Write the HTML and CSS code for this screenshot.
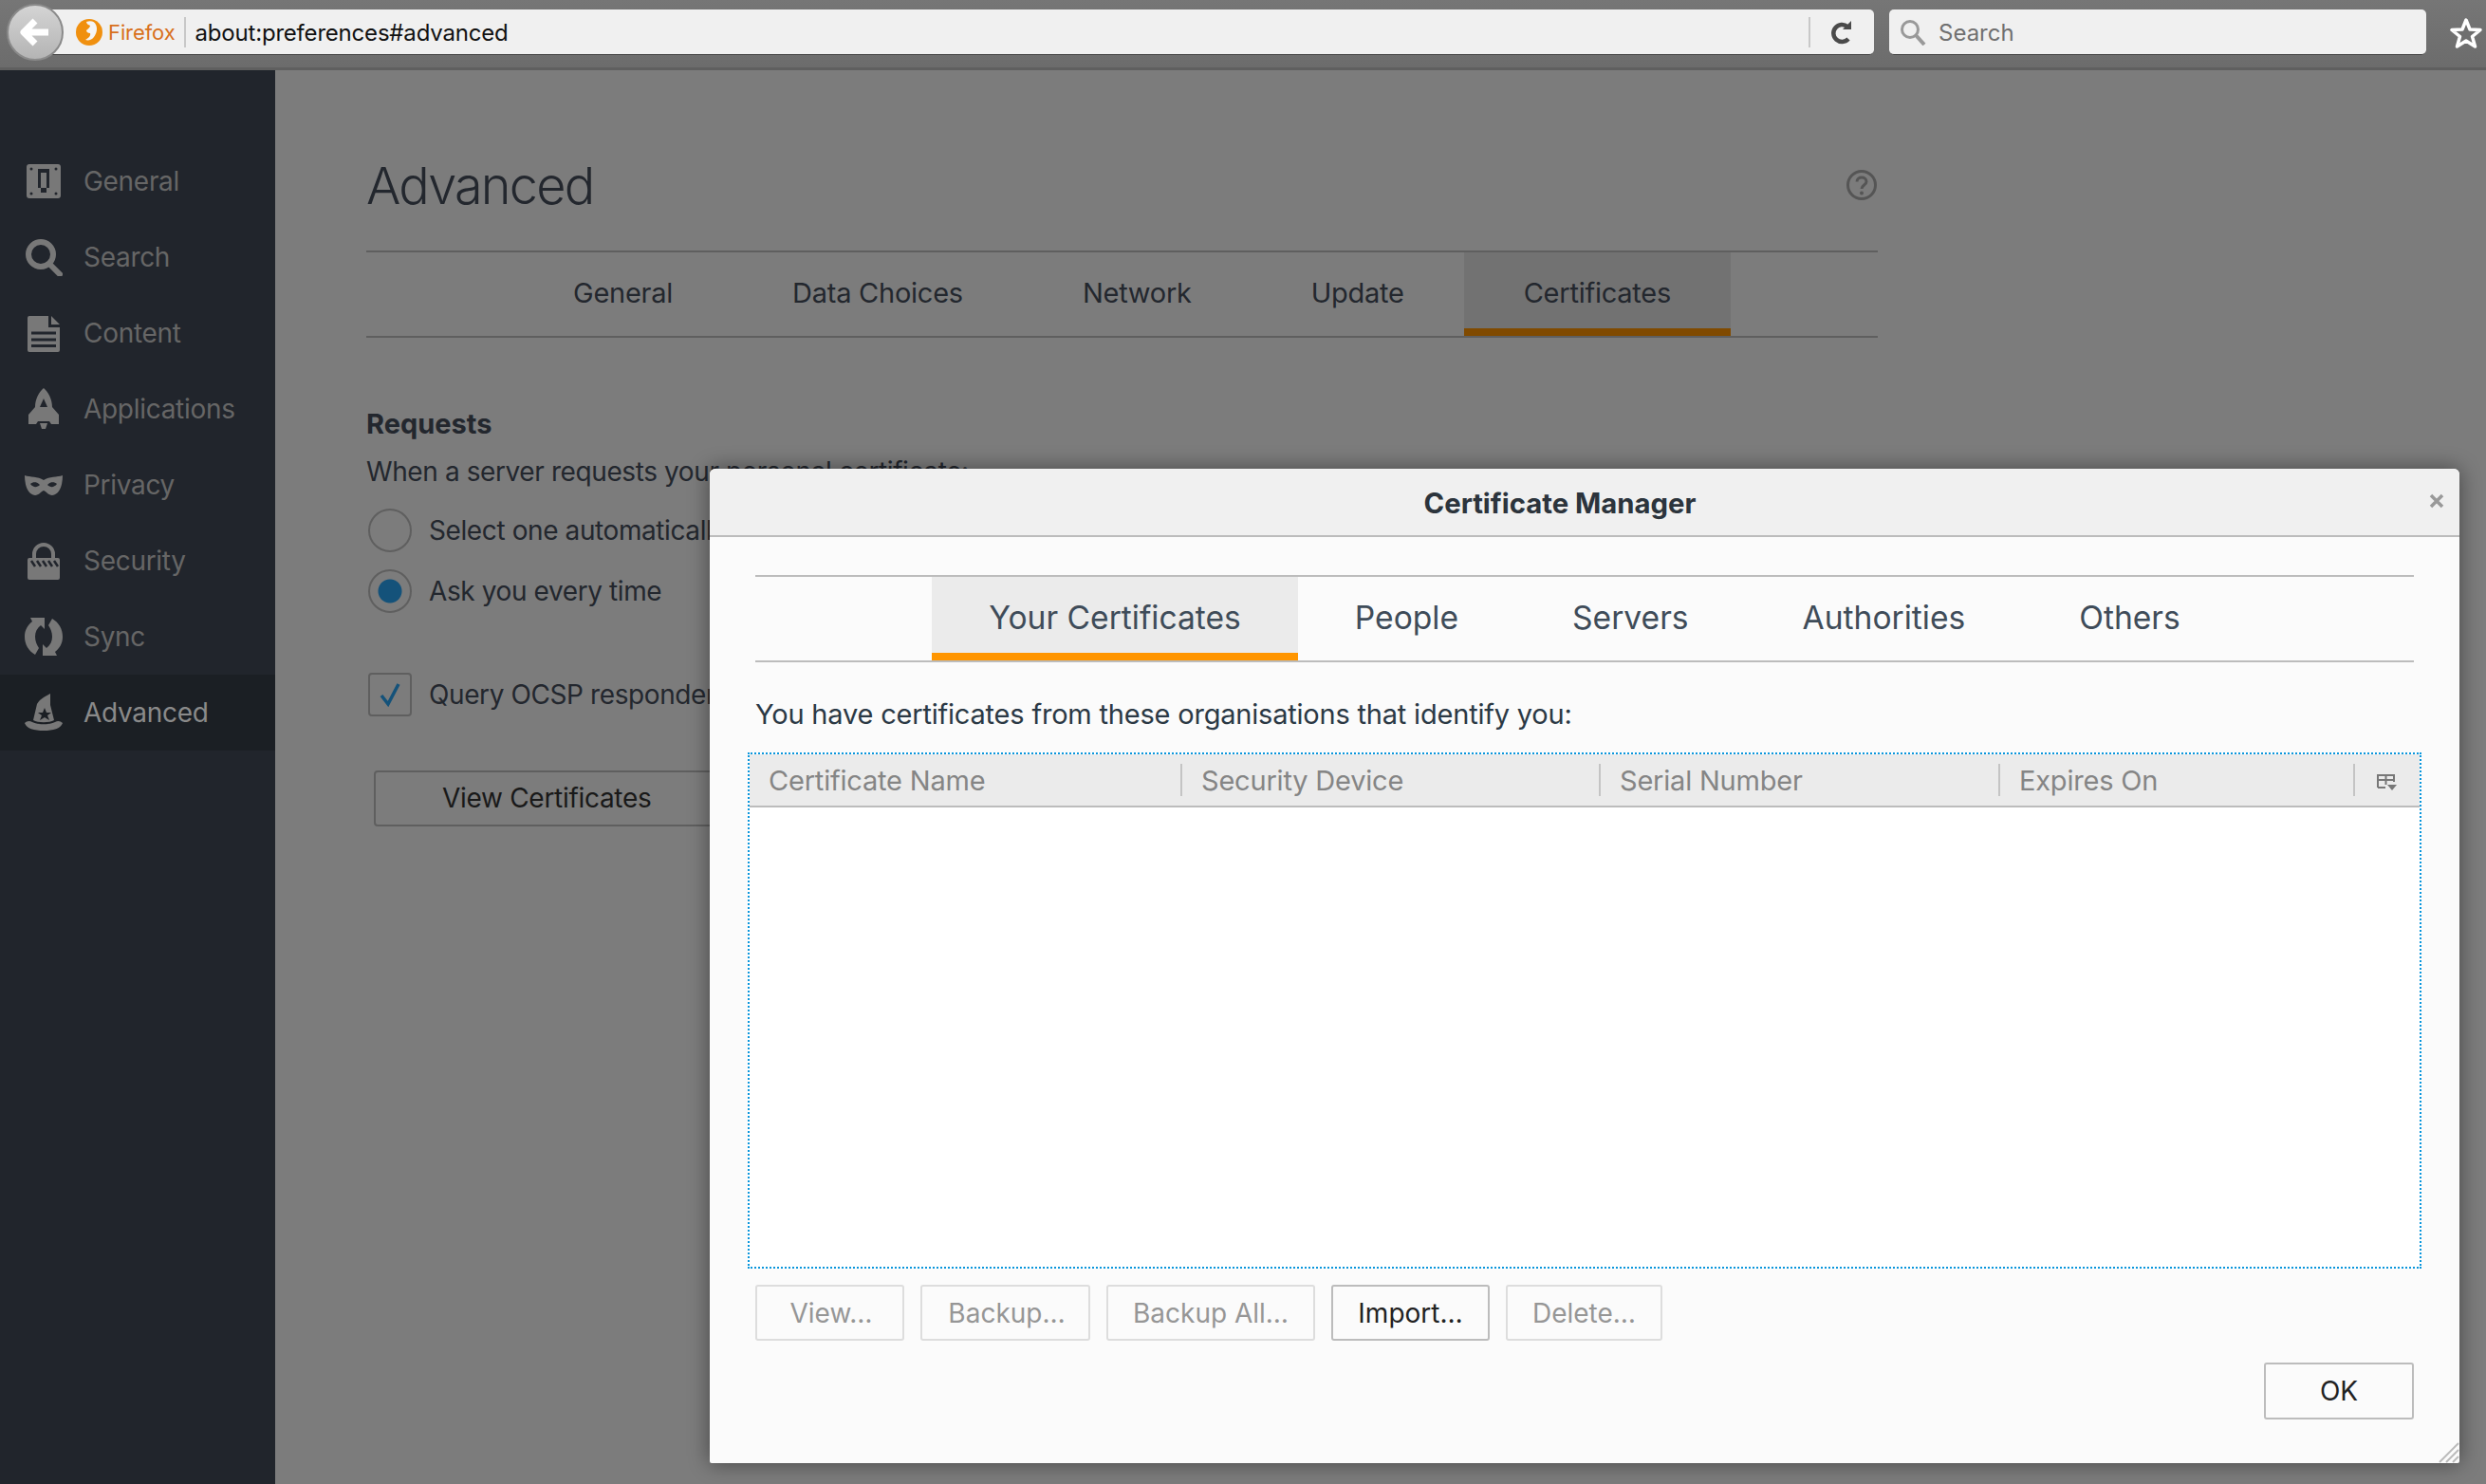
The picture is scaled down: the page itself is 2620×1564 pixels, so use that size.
FILE: index.html
```html
<!DOCTYPE html>
<html lang="en">
  <head>
    <meta charset="UTF-8" />
    <title>about:preferences#advanced</title>
    <link rel="stylesheet" href="styles.css">
  </head>
  <body>
    <!-- browser toolbar -->
    <div class="toolbar">
      <div class="back-button">
        <svg width="34" height="34" viewBox="0 0 34 34">
          <path d="M17 5 L5 17 L17 29 M6 17 H31" fill="none" stroke="#fff" stroke-width="7" stroke-linejoin="round" />
        </svg>
      </div>
      <div class="urlbar">
        <svg class="fx-logo" width="28" height="28" viewBox="0 0 28 28">
          <circle cx="14" cy="14" r="14" fill="#f0900f" />
          <path d="M11 3 C16 1 20 3 21 6 C23 10 22 15 19 19 C17 22 13 23 10 22 C13 20 16 18 15 15 C13 15 11 14 11 12 C13 10 15 9 15 7 C13 6 11 5 11 3 Z" fill="#f5f5f5" />
        </svg>
        <span class="identity">Firefox</span>
        <span class="url-text">about:preferences#advanced</span>
        <span class="reload">
          <svg width="26" height="26" viewBox="0 0 26 26">
            <path d="M19 7 A9 9 0 1 0 20 20" fill="none" stroke="#4a4a4a" stroke-width="4.5" />
            <path d="M14 10 L23 10 L23 1 Z" fill="#4a4a4a" />
          </svg>
        </span>
      </div>
      <div class="searchbar">
        <svg width="28" height="28" viewBox="0 0 28 28">
          <circle cx="11" cy="11" r="8.5" fill="none" stroke="#999" stroke-width="3" />
          <path d="M17 17 L26 27" stroke="#999" stroke-width="4" />
        </svg>
        <span>Search</span>
      </div>
      <svg class="star" width="34" height="34" viewBox="0 0 34 34">
        <path d="M17 3 L21 13 L32 13.5 L23.5 20.5 L26.5 31 L17 25 L7.500 31 L10.500 20.500 L2 13.500 L13 13 Z" fill="#6f6f6f" stroke="#fff" stroke-width="3.5" stroke-linejoin="round" />
      </svg>
    </div>

    <div class="main">
      <!-- left categories -->
      <div class="sidebar">
        <div class="cat">
          <svg width="40" height="40" viewBox="0 0 40 40">
            <rect x="2" y="2" width="36" height="36" rx="3" fill="#787878" />
            <circle cx="7" cy="7" r="1.500" fill="#21252c" /><circle cx="33" cy="7" r="1.500" fill="#21252c" />
            <circle cx="7" cy="33" r="1.500" fill="#21252c" /><circle cx="33" cy="33" r="1.500" fill="#21252c" />
            <path d="M14 7 H26 V27 H23 V32 H17 V27 H14 Z" fill="#21252c" />
            <rect x="17" y="11" width="6" height="16" fill="#787878" />
          </svg>
          <span>General</span>
        </div>
        <div class="cat">
          <svg width="40" height="40" viewBox="0 0 40 40">
            <circle cx="17" cy="17" r="13" fill="none" stroke="#787878" stroke-width="6" />
            <path d="M26 27 L37 38" stroke="#787878" stroke-width="6" stroke-linecap="round" />
          </svg>
          <span>Search</span>
        </div>
        <div class="cat">
          <svg width="40" height="40" viewBox="0 0 40 40">
            <path d="M5 2 Q3 2 3 4 V38 Q3 40 5 40 H35 Q37 40 37 38 V14 H25 V2 Z M28 2 L37 11 H28 Z" fill="#787878" />
            <path d="M7 20 H33 M7 27 H33 M7 33.500 H33" stroke="#21252c" stroke-width="3" />
          </svg>
          <span>Content</span>
        </div>
        <div class="cat">
          <svg width="40" height="44" viewBox="0 0 40 44">
            <path d="M20 0 C25 4 29 12 29 20 L36 28 V38 H28 L26 35 H14 L12 38 H4 V28 L11 20 C11 12 15 4 20 0 Z" fill="#787878" />
            <path d="M20 11 L24 20 H16 Z" fill="#21252c" />
            <path d="M16 37 H24 L22 43 H18 Z" fill="#787878" />
          </svg>
          <span>Applications</span>
        </div>
        <div class="cat">
          <svg width="40" height="24" viewBox="0 0 40 24">
            <path d="M0 2 C6 4 14 3 20 7 C26 3 34 4 40 2 C40 12 37 22 29 23 C25 23 23 19 20 18 C17 19 15 23 11 23 C3 22 0 12 0 2 Z" fill="#787878" />
            <path d="M6 11 C9 8 14 9 16 12 C13 15 9 15 6 11 Z M34 11 C31 8 26 9 24 12 C27 15 31 15 34 11 Z" fill="#21252c" />
          </svg>
          <span>Privacy</span>
        </div>
        <div class="cat">
          <svg width="40" height="40" viewBox="0 0 40 40">
            <path d="M10 18 V13 A10 10 0 0 1 30 13 V18" fill="none" stroke="#787878" stroke-width="4" />
            <rect x="3" y="17" width="34" height="23" rx="2" fill="#787878" />
            <path d="M7 20 L11 26 M13 20 L17 26 M19 20 L23 26 M25 20 L29 26 M31 20 L35 26" stroke="#21252c" stroke-width="2.500" />
          </svg>
          <span>Security</span>
        </div>
        <div class="cat">
          <svg width="40" height="42" viewBox="0 0 40 42">
            <path d="M6 1 L21 1 L21 13 L17 9 C13 12 11 16 11 21 C11 26 13 30 15 33 L11 40 C4 36 0 29 0 21 C0 14 3 9 8 5 Z" fill="#787878" />
            <path d="M6 1 L21 1 L21 13 L17 9 C13 12 11 16 11 21 C11 26 13 30 15 33 L11 40 C4 36 0 29 0 21 C0 14 3 9 8 5 Z" fill="#787878" transform="rotate(180 20 21)" />
          </svg>
          <span>Sync</span>
        </div>
        <div class="cat active">
          <svg width="40" height="40" viewBox="0 0 40 40">
            <path d="M27 0 C24 2 16 5 13 11 L9 28 C14 31 26 31 31 28 L27 12 Z" fill="#787878" />
            <path d="M0 31 C2 29 5 28 8 30 C14 33 26 33 32 30 C35 28 38 29 40 31 C38 37 30 39 20 39 C10 39 2 37 0 31 Z" fill="#787878" />
            <path d="M21 15 L23 20 L28 20 L24 23 L26 28 L21 25 L16 28 L18 23 L14 20 L19 20 Z" fill="#1b1f24" />
          </svg>
          <span>Advanced</span>
        </div>
      </div>

      <!-- preferences pane, dimmed behind the dialog -->
      <div class="content">
        <div class="pane-title">
          <h1>Advanced</h1>
          <svg width="32" height="32" viewBox="0 0 32 32">
            <circle cx="16" cy="16" r="14.500" fill="none" stroke="#555" stroke-width="3" />
            <path d="M11 12.500 C11 6.500 21 6.500 21 12.500 C21 16 16 16 16 20" fill="none" stroke="#555" stroke-width="3" />
            <circle cx="16" cy="24.500" r="2" fill="#555" />
          </svg>
        </div>
        <div class="tabs pane-tabs">
          <div class="tab">General</div>
          <div class="tab">Data Choices</div>
          <div class="tab">Network</div>
          <div class="tab">Update</div>
          <div class="tab selected">Certificates</div>
        </div>
        <h2>Requests</h2>
        <p class="line">When a server requests your personal certificate:</p>
        <div class="option first">
          <span class="radio"></span>
          <span>Select one automatically</span>
        </div>
        <div class="option">
          <span class="radio on"></span>
          <span>Ask you every time</span>
        </div>
        <div class="option ocsp">
          <span class="check">
            <svg width="24" height="26" viewBox="0 0 24 26">
              <path d="M3 14 L10 23 L21 2" fill="none" stroke="#14527a" stroke-width="3.500" />
            </svg>
          </span>
          <span>Query OCSP responder servers to confirm the current validity of certificates</span>
        </div>
        <div class="pane-buttons">
          <div class="pane-btn">View Certificates</div>
          <div class="pane-btn">Security Devices</div>
        </div>
      </div>
    </div>

    <!-- certificate manager dialog -->
    <div class="dialog">
      <div class="dialog-head">
        <div class="dialog-title">Certificate Manager</div>
        <svg class="dialog-close" width="16" height="16" viewBox="0 0 16 16">
          <path d="M2 2 L14 14 M14 2 L2 14" stroke="#999" stroke-width="3.500" />
        </svg>
      </div>
      <div class="dialog-body">
        <div class="tabs dialog-tabs">
          <div class="tab selected">Your Certificates</div>
          <div class="tab">People</div>
          <div class="tab">Servers</div>
          <div class="tab">Authorities</div>
          <div class="tab">Others</div>
        </div>
        <p class="intro">You have certificates from these organisations that identify you:</p>
        <div class="tree">
          <div class="tree-head">
            <div class="col">Certificate Name</div>
            <div class="col">Security Device</div>
            <div class="col">Serial Number</div>
            <div class="col">Expires On</div>
            <div class="col col-picker">
              <svg width="22" height="20" viewBox="0 0 22 20">
                <path d="M1 15 V2 H18 V9 M1 7 H18 M9.500 2 V12 M1 15 H9" fill="none" stroke="#777" stroke-width="2" />
                <path d="M11 12 H21 L16 18 Z" fill="#777" />
              </svg>
            </div>
          </div>
          <div class="tree-rows"></div>
        </div>
        <div class="actions">
          <div class="btn off view">View…</div>
          <div class="btn off backup">Backup…</div>
          <div class="btn off backup-all">Backup All…</div>
          <div class="btn import">Import…</div>
          <div class="btn off delete">Delete…</div>
        </div>
        <div class="footer">
          <div class="btn ok">OK</div>
        </div>
      </div>
      <svg class="grip" width="22" height="22" viewBox="0 0 22 22">
        <path d="M1 21 L21 1 M8 21 L21 8 M15 21 L21 15" stroke="#bbb" stroke-width="2" />
      </svg>
    </div>
  </body>
</html>
```

FILE: styles.css
```css
html,
body {
  margin: 0;
  width: 2620px;
  height: 1564px;
  overflow: hidden;
}
body {
  position: relative;
  background-color: #7c7c7c;
  color: #23272e;
  font-family: Inter, "Liberation Sans", sans-serif;
}

/* toolbar */
.toolbar {
  display: flex;
  align-items: flex-start;
  box-sizing: border-box;
  height: 74px;
  padding: 10px 0 0 7px;
  background: linear-gradient(#767676, #6c6c6c);
  border-bottom: 3px solid #5f5f5f;
}
.back-button {
  flex: none;
  display: flex;
  align-items: center;
  justify-content: center;
  box-sizing: border-box;
  width: 60px;
  height: 60px;
  margin: -6px -27px 0 0;
  border-radius: 50%;
  border: 2px solid #8a8a8a;
  background: linear-gradient(#d4d4d4, #b4b4b4);
  position: relative;
  z-index: 1;
}
.urlbar {
  display: flex;
  align-items: center;
  box-sizing: border-box;
  width: 1935px;
  height: 48px;
  padding-left: 40px;
  background-color: #f0f0f0;
  border-radius: 0 5px 5px 0;
  border-bottom: 1px solid #444;
}
.identity {
  margin-left: 6px;
  padding-right: 9px;
  color: #d8701c;
  font-size: 22px;
  letter-spacing: -0.1px;
  line-height: 32px;
  border-right: 2px solid #c8c8c8;
}
.url-text {
  flex: 1;
  margin-left: 10px;
  padding-top: 2px;
  color: #111;
  font-size: 24px;
  letter-spacing: -0.2px;
}
.reload {
  display: flex;
  align-items: center;
  width: 69px;
  height: 32px;
  padding-left: 20px;
  box-sizing: border-box;
  border-left: 2px solid #c8c8c8;
}
.searchbar {
  display: flex;
  align-items: center;
  gap: 13px;
  box-sizing: border-box;
  width: 566px;
  height: 48px;
  margin-left: 16px;
  padding-left: 11px;
  background-color: #f0f0f0;
  border-radius: 5px;
  border-bottom: 1px solid #444;
  color: #707070;
  font-size: 24px;
}
.searchbar span {
  padding-top: 2px;
}
.star {
  margin: 8px 0 0 25px;
}

/* sidebar and pane */
.main {
  display: flex;
  height: 1490px;
}
.sidebar {
  flex: none;
  box-sizing: border-box;
  width: 290px;
  padding-top: 77px;
  background-color: #21252c;
}
.cat {
  display: flex;
  align-items: center;
  height: 80px;
  color: #666666;
  font-size: 28px;
  letter-spacing: -0.3px;
}
.cat svg {
  flex: none;
  margin-left: 26px;
}
.cat span {
  margin-left: 22px;
}
.cat.active {
  background-color: #1b1f24;
  color: #8a8a8a;
}
.content {
  width: 1593px;
  margin-left: 96px;
}
.pane-title {
  display: flex;
  align-items: center;
  justify-content: space-between;
  height: 70px;
  padding: 86px 1px 34px 0;
}
.pane-title h1 {
  margin: 0;
  font-size: 54px;
  letter-spacing: -1.8px;
  font-weight: 350;
}
.tabs {
  display: flex;
  justify-content: center;
  box-sizing: border-box;
  border-top: 2px solid #5f5f5f;
  border-bottom: 2px solid #5f5f5f;
}
.pane-tabs {
  height: 92px;
  font-size: 29px;
  letter-spacing: -0.25px;
}
.pane-tabs .tab {
  padding: 0 63px;
  line-height: 85px;
}
.pane-tabs .selected {
  background-color: #727272;
  border-bottom: 8px solid #804a00;
  height: 80px;
}
h2 {
  margin: 73px 0 0;
  font-size: 29px;
  line-height: 36px;
  font-weight: 700;
}
.line {
  margin: 14px 0 0;
  font-size: 28px;
  letter-spacing: -0.4px;
  line-height: 36px;
}
.option {
  display: flex;
  align-items: center;
  gap: 18px;
  height: 46px;
  margin: 18px 0 0 2px;
  font-size: 28px;
  letter-spacing: -0.4px;
  white-space: nowrap;
}
.option.first {
  margin-top: 21px;
}
.radio {
  flex: none;
  box-sizing: border-box;
  width: 46px;
  height: 46px;
  border: 2px solid #5f5f5f;
  border-radius: 50%;
}
.radio.on {
  border-width: 2px;
  background: radial-gradient(circle, #14527a 12px, transparent 13px);
}
.ocsp {
  margin-top: 63px;
}
.check {
  flex: none;
  display: flex;
  align-items: center;
  justify-content: center;
  box-sizing: border-box;
  width: 46px;
  height: 46px;
  border: 2px solid #5f5f5f;
  border-radius: 4px;
}
.pane-buttons {
  display: flex;
  gap: 20px;
  margin: 57px 0 0 8px;
}
.pane-btn {
  box-sizing: border-box;
  width: 370px;
  height: 59px;
  padding-left: 70px;
  border: 2px solid #5f5f5f;
  border-radius: 4px;
  color: #191919;
  font-size: 28px;
  letter-spacing: -0.3px;
  line-height: 55px;
  white-space: nowrap;
}

/* dialog */
.dialog {
  position: absolute;
  left: 748px;
  top: 494px;
  box-sizing: border-box;
  width: 1844px;
  height: 1048px;
  background-color: #fbfbfb;
  border-radius: 6px 6px 2px 2px;
  box-shadow: 0 0 22px rgba(0, 0, 0, 0.45);
}
.dialog-head {
  display: flex;
  align-items: center;
  box-sizing: border-box;
  height: 72px;
  padding-top: 3px;
  background-color: #f0f0f0;
  border-bottom: 2px solid #bcbcbc;
  border-radius: 6px 6px 0 0;
}
.dialog-title {
  flex: 1;
  text-align: center;
  color: #2c343c;
  font-size: 29.3px;
  font-weight: 700;
}
.dialog-close {
  flex: none;
  margin: -5px 16px 0 20px;
}
.dialog-body {
  padding: 40px 48px 0 48px;
}
.dialog-tabs {
  height: 92px;
  border-color: #bcbcbc;
  color: #3f4c59;
  font-size: 33.6px;
}
.dialog-tabs .tab {
  padding: 0 60px;
  line-height: 86px;
}
.dialog-tabs .selected {
  height: 88px;
  box-sizing: border-box;
  background-color: #ebebeb;
  border-bottom: 8px solid #ff9500;
}
.intro {
  margin: 35px 0 0;
  color: #2b3945;
  font-size: 29px;
  letter-spacing: -0.2px;
  line-height: 40px;
}
.tree {
  display: flex;
  flex-direction: column;
  box-sizing: border-box;
  width: 1764px;
  height: 544px;
  margin: 20px 0 0 -8px;
  border: 2px dotted #0a96dc;
  background-color: #ffffff;
}
.tree-head {
  display: grid;
  grid-template-columns: 456px 441px 421px 374px 1fr;
  box-sizing: border-box;
  height: 56px;
  background-color: #ebebeb;
  border-bottom: 2px solid #bcbcbc;
  color: #858585;
  font-size: 29px;
  letter-spacing: -0.2px;
}
.col {
  display: flex;
  align-items: center;
  height: 34px;
  margin-top: 10px;
  padding-left: 20px;
  border-right: 2px solid #c4c4c4;
  white-space: nowrap;
}
.col-picker {
  border-right: none;
  padding: 3px 0 0 23px;
}
.actions {
  display: flex;
  gap: 17px;
  margin-top: 17px;
}
.btn {
  box-sizing: border-box;
  height: 59px;
  border: 2px solid #bcbcbc;
  border-radius: 3px;
  color: #222;
  font-size: 28px;
  line-height: 57px;
  text-align: center;
}
.btn.off {
  border-color: #dddddd;
  color: #969696;
}
.view { width: 157px; text-indent: 3px; }
.backup { width: 179px; text-indent: 3px; }
.backup-all { width: 220px; }
.import { width: 167px; }
.delete { width: 165px; }
.footer {
  display: flex;
  justify-content: flex-end;
  margin-top: 23px;
}
.ok {
  width: 158px;
  height: 60px;
}
.grip {
  position: absolute;
  right: 0;
  bottom: 0;
}
```
